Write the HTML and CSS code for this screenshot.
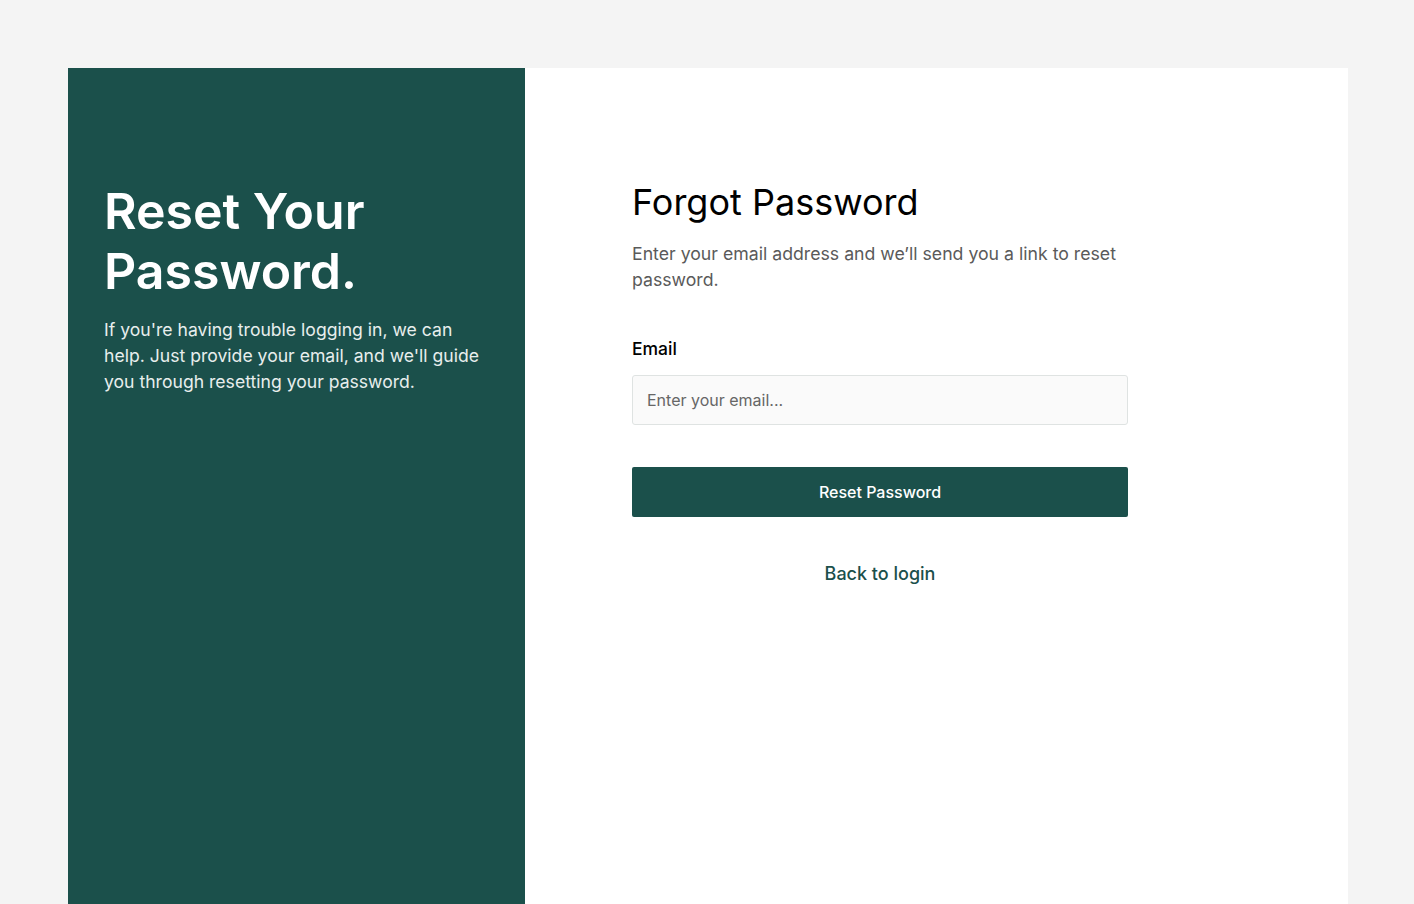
FILE: index.html
```html
<!DOCTYPE html>
<html lang="en">
<head>
<meta charset="utf-8">
<title>Forgot Password</title>
<link rel="stylesheet" href="styles.css">
</head>
<body>
<main class="page">
  <div class="card">
    <section class="aside">
      <h1 class="aside-title">Reset Your Password.</h1>
      <p class="aside-text">If you're having trouble logging in, we can help. Just provide your email, and we'll guide you through resetting your password.</p>
    </section>
    <section class="main">
      <div class="form-wrap">
        <h2 class="title">Forgot Password</h2>
        <p class="subtitle">Enter your email address and we’ll send you a link to reset password.</p>
        <form class="form">
          <label class="label" for="email">Email</label>
          <input class="input" id="email" type="email" placeholder="Enter your email...">
          <button class="btn" type="button">Reset Password</button>
        </form>
        <div class="back"><a href="#" class="back-link">Back to login</a></div>
      </div>
    </section>
  </div>
</main>
</body>
</html>
```

FILE: styles.css
```css
* { box-sizing: border-box; }
html, body { margin: 0; padding: 0; }
body {
  background: #f4f4f4;
  font-family: Inter, "Noto Sans", sans-serif;
  overflow: hidden;
}
.page {
  padding: 68px 66px 0 68px;
}
.card {
  display: flex;
  background: #ffffff;
  min-height: 900px;
}
.aside {
  width: 457px;
  flex: none;
  background: #1b504b;
  color: #ffffff;
  padding: 113px 36px 0 36px;
}
.aside-title {
  margin: 0;
  font-size: 50px;
  line-height: 60px;
  font-weight: 600;
  letter-spacing: 0;
}
.aside-text {
  margin: 16px 0 0 0;
  font-size: 17.6px;
  line-height: 26px;
  color: #e8eeed;
}
.main {
  flex: 1;
  padding: 113px 0 0 107px;
}
.form-wrap {
  width: 496px;
}
.title {
  margin: 0;
  font-size: 36px;
  line-height: 43px;
  font-weight: 400;
  color: #000000;
}
.subtitle {
  margin: 17px 0 0 0;
  font-size: 17.7px;
  line-height: 26px;
  color: #5a5a5a;
}
.form {
  display: flex;
  flex-direction: column;
  margin-top: 43px;
}
.label {
  font-size: 17.5px;
  line-height: 26px;
  font-weight: 500;
  color: #000000;
}
.input {
  margin-top: 13px;
  height: 50px;
  border: 1px solid #dfe3e2;
  border-radius: 3px;
  background: #fafafa;
  padding: 0 14px;
  font-family: inherit;
  font-size: 16px;
  color: #333;
  outline: none;
}
.input::placeholder { color: #666666; }
.btn {
  margin-top: 42px;
  height: 50px;
  border: none;
  border-radius: 2px;
  background: #1b504b;
  color: #ffffff;
  font-family: inherit;
  font-size: 16px;
  font-weight: 500;
  cursor: pointer;
}
.back {
  margin-top: 44px;
  text-align: center;
}
.back-link {
  font-size: 18px;
  line-height: 26px;
  color: #1b504b;
  font-weight: 500;
  text-decoration: none;
}
```
